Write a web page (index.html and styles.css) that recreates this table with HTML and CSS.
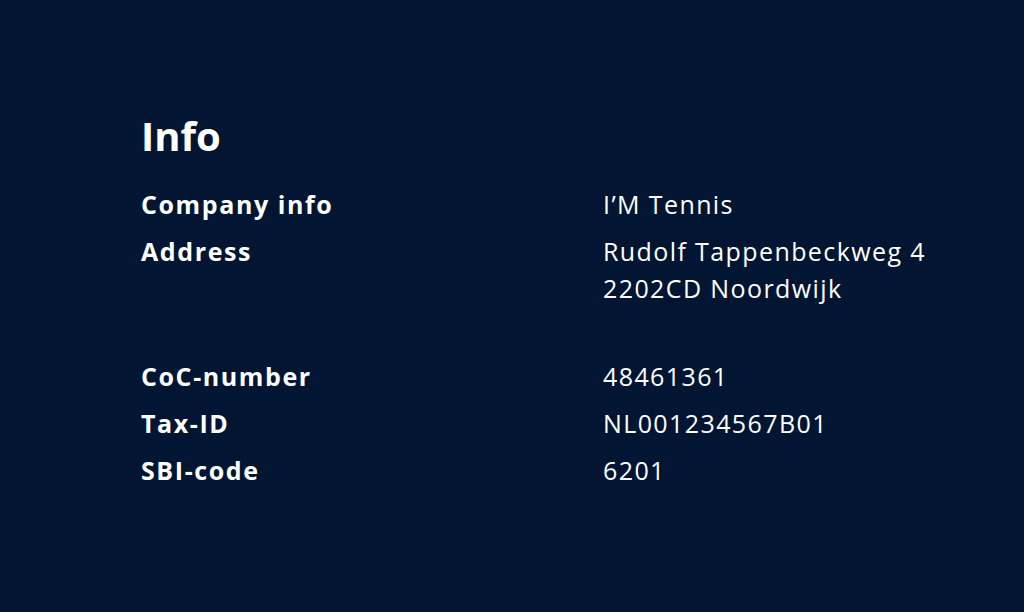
FILE: index.html
```html
<!DOCTYPE html>
<html lang="en">
<head>
<meta charset="utf-8">
<link rel="stylesheet" href="styles.css">
</head>
<body>
<section class="info">
  <h1 class="info-title">Info</h1>
  <dl class="info-grid">
    <dt class="label">Company info</dt>
    <dd class="value">I’M Tennis</dd>
    <dt class="label">Address</dt>
    <dd class="value value-address">Rudolf Tappenbeckweg 4<br>2202CD Noordwijk</dd>
    <dt class="label">CoC-number</dt>
    <dd class="value">48461361</dd>
    <dt class="label">Tax-ID</dt>
    <dd class="value">NL001234567B01</dd>
    <dt class="label">SBI-code</dt>
    <dd class="value">6201</dd>
  </dl>
</section>
</body>
</html>
```
FILE: styles.css
```css
html, body {
  margin: 0;
  padding: 0;
}
body {
  background: #021633;
  color: #ffffff;
  font-family: "Open Sans", "Noto Sans", sans-serif;
  width: 1024px;
  height: 612px;
  overflow: hidden;
}
.info {
  padding: 108px 0 0 141px;
}
.info-title {
  margin: 0 0 22px 0;
  font-size: 40px;
  font-weight: 700;
  line-height: 56px;
}
.info-grid {
  display: grid;
  grid-template-columns: 462px 1fr;
  row-gap: 10px;
  margin: 0;
  font-size: 25px;
  line-height: 37px;
}
.label {
  font-weight: 700;
  margin: 0;
  letter-spacing: 1.6px;
}
.value {
  margin: 0;
  font-weight: 400;
  letter-spacing: 1.4px;
  white-space: nowrap;
}
.value-address {
  margin-bottom: 41px;
}
```
